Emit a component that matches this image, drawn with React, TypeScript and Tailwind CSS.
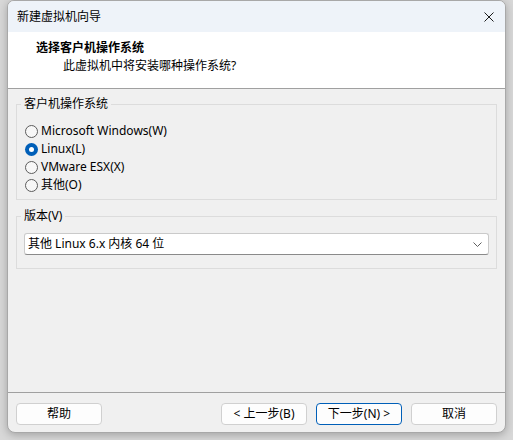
const font = "font-['Noto_Sans','Noto_Sans_CJK_SC',sans-serif]";

function Radio({ label, checked }: { label: string; checked?: boolean }) {
  return (
    <div className="flex h-[18px] items-center">
      {checked ? (
        <span className="flex h-[13px] w-[13px] items-center justify-center rounded-full bg-[#005fb8]">
          <span className="h-[5px] w-[5px] rounded-full bg-white" />
        </span>
      ) : (
        <span className="h-[13px] w-[13px] rounded-full border border-[#5c5c5c] bg-[#f7f7f7]" />
      )}
      <span className="ml-[3px] leading-[16px]">{label}</span>
    </div>
  );
}

function Button({ children, primary }: { children: string; primary?: boolean }) {
  return (
    <button
      className={
        primary
          ? "h-[22px] w-[86px] rounded-[4px] border border-[#005fb8] bg-[#fdfdfd] text-[12px] leading-[16px] text-black"
          : "h-[22px] w-[86px] rounded-[4px] border border-[#d0d0d0] bg-[#fdfdfd] text-[12px] leading-[16px] text-black"
      }
    >
      {children}
    </button>
  );
}

export default function App() {
  return (
    <div className={`${font} h-[440px] w-[513px] bg-[#d8d8d8] pl-[7px] text-[12px] text-black`}>
      <div className="flex h-[433px] w-[499px] flex-col overflow-hidden rounded-t-[7px] rounded-b-[8px] border border-[#a8a8a8] bg-[#f0f0f0] shadow-[0_2px_8px_rgba(0,0,0,0.25)]">
        {/* title bar */}
        <div className="flex h-[31px] shrink-0 items-center justify-between bg-[#eef3f9] pl-[9px] pr-[11px]">
          <span className="leading-[16px]">新建虚拟机向导</span>
          <svg width="10" height="10" viewBox="0 0 10 10" fill="none" stroke="#1b1b1b" strokeWidth="1">
            <path d="M0.5 0.5 L9.5 9.5 M9.5 0.5 L0.5 9.5" />
          </svg>
        </div>

        {/* header */}
        <div className="flex h-[57px] shrink-0 flex-col border-b border-[#a0a0a0] bg-white pl-[28px] pt-[7px]">
          <span className="text-[12px] font-bold leading-[18px]">选择客户机操作系统</span>
          <span className="ml-[27px] text-[12px] leading-[18px]">此虚拟机中将安装哪种操作系统?</span>
        </div>

        {/* body */}
        <div className="flex flex-1 flex-col px-[8px] pt-[7px]">
          <fieldset className="border border-[#dcdcdc] pb-[5px] pl-[4px] pr-[7px]">
            <legend className="px-[3px] leading-[16px]">客户机操作系统</legend>
            <div className="flex flex-col pl-[4px] pt-[10px]">
              <Radio label="Microsoft Windows(W)" />
              <Radio label="Linux(L)" checked />
              <Radio label="VMware ESX(X)" />
              <Radio label="其他(O)" />
            </div>
          </fieldset>

          <fieldset className="mt-[8px] border border-[#dcdcdc] pb-[13px] pl-[4px] pr-[7px]">
            <legend className="px-[3px] leading-[16px]">版本(V)</legend>
            <div className="pl-[3px] pt-[9px]">
              <div className="flex h-[22px] items-center justify-between rounded-[3px] border border-[#cacaca] border-b-[#8a8a8a] bg-white pl-[3px] pr-[6px]">
                <span className="leading-[16px]">其他 Linux 6.x 内核 64 位</span>
                <svg width="9" height="5" viewBox="0 0 9 5" fill="none" stroke="#5f5f5f" strokeWidth="1">
                  <path d="M0.5 0.5 L4.5 4.5 L8.5 0.5" />
                </svg>
              </div>
            </div>
          </fieldset>
        </div>

        {/* footer */}
        <div className="flex h-[40px] shrink-0 items-center justify-between border-t border-[#a0a0a0] px-[8px] pb-[7px] pt-[9px]">
          <Button>帮助</Button>
          <div className="flex gap-[9px]">
            <Button>&lt; 上一步(B)</Button>
            <Button primary>下一步(N) &gt;</Button>
            <Button>取消</Button>
          </div>
        </div>
      </div>
    </div>
  );
}
